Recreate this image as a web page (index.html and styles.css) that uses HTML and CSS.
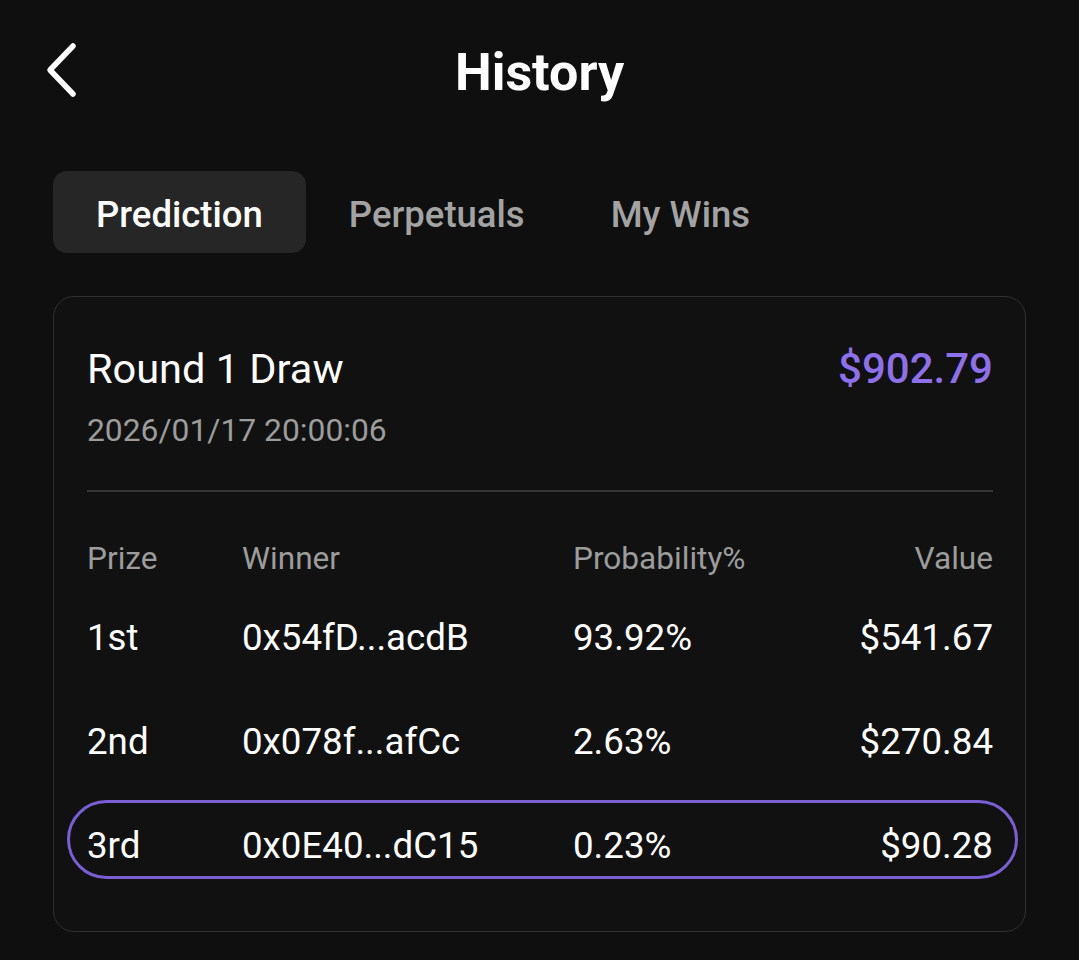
FILE: index.html
```html
<!DOCTYPE html>
<html lang="en">
<head>
<meta charset="utf-8">
<title>History</title>
<link rel="stylesheet" href="styles.css">
</head>
<body>
<div class="page">
  <header class="topbar">
    <button class="back" aria-label="Back">
      <svg width="40" height="60" viewBox="0 0 40 60">
        <path d="M29 5 L6 29 L29 53" fill="none" stroke="#ffffff" stroke-width="5.5" stroke-linecap="round" stroke-linejoin="round"/>
      </svg>
    </button>
    <h1 class="title">History</h1>
    <div class="spacer"></div>
  </header>

  <nav class="tabs">
    <div class="tab active">Prediction</div>
    <div class="tab">Perpetuals</div>
    <div class="tab">My Wins</div>
  </nav>

  <section class="card">
    <div class="card-head">
      <div class="head-left">
        <div class="round">Round 1 Draw</div>
        <div class="date">2026/01/17 20:00:06</div>
      </div>
      <div class="total">$902.79</div>
    </div>
    <div class="divider"></div>
    <div class="table">
      <div class="row head">
        <div>Prize</div>
        <div>Winner</div>
        <div>Probability%</div>
        <div class="val">Value</div>
      </div>
      <div class="row">
        <div>1st</div>
        <div>0x54fD...acdB</div>
        <div>93.92%</div>
        <div class="val">$541.67</div>
      </div>
      <div class="row">
        <div>2nd</div>
        <div>0x078f...afCc</div>
        <div>2.63%</div>
        <div class="val">$270.84</div>
      </div>
      <div class="row mine">
        <div>3rd</div>
        <div>0x0E40...dC15</div>
        <div>0.23%</div>
        <div class="val">$90.28</div>
      </div>
    </div>
  </section>
</div>
</body>
</html>
```

FILE: styles.css
```css
* { box-sizing: border-box; }
html, body {
  margin: 0;
  padding: 0;
  background: #0f0f0f;
}
body {
  font-family: Roboto, "Noto Sans", "Liberation Sans", sans-serif;
  color: #ffffff;
  width: 1079px;
  height: 960px;
  overflow: hidden;
}
.page {
  padding: 0 53px;
}
.topbar {
  height: 146px;
  display: grid;
  grid-template-columns: 1fr auto 1fr;
  align-items: center;
}
.back {
  background: none;
  border: 0;
  padding: 0;
  margin-left: -9px;
  margin-top: -4px;
  width: 40px;
  height: 60px;
  display: flex;
  cursor: pointer;
}
.title {
  margin: 0;
  font-size: 52px;
  font-weight: 700;
  line-height: 60px;
  color: #ffffff;
}
.tabs {
  margin-top: 25px;
  display: flex;
}
.tab {
  height: 82px;
  padding: 4px 43px 0;
  display: flex;
  align-items: center;
  font-size: 36.5px;
  font-weight: 500;
  color: #a3a3a3;
  border-radius: 14px;
}
.tab.active {
  background: #262626;
  color: #ffffff;
}
.card {
  margin-top: 43px;
  border: 1.5px solid #303030;
  border-radius: 21px;
  padding: 47px 32px 52px 33px;
  background: #111111;
}
.card-head {
  display: flex;
  justify-content: space-between;
  align-items: flex-start;
}
.round {
  font-size: 41.5px;
  line-height: 50px;
  color: #ffffff;
}
.date {
  margin-top: 17px;
  font-size: 31.8px;
  line-height: 38px;
  color: #9c9c9c;
}
.total {
  font-size: 42px;
  line-height: 50px;
  font-weight: 500;
  color: #8d70ea;
}
.divider {
  height: 2px;
  background: #363636;
  margin-top: 41px;
}
.table {
  display: flex;
  flex-direction: column;
  gap: 25px;
}
.row {
  display: grid;
  grid-template-columns: 155px 331px 1fr auto;
  align-items: center;
  height: 79px;
  padding-top: 12px;
  font-size: 36.7px;
  color: #ffffff;
}
.row.head {
  margin-top: 34px;
  margin-bottom: -23px;
  height: 64px;
  padding-top: 0;
  font-size: 31.6px;
  color: #9c9c9c;
}
.val {
  text-align: right;
}
.row.mine {
  margin: 0 -25px 0 -20px;
  padding: 12px 22px 0 17px;
  border: 3px solid #7a5fd4;
  border-radius: 40px;
}
```
